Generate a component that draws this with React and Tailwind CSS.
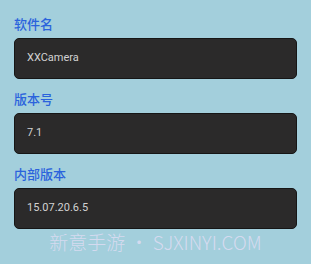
import React from 'react';

const fields = [
  { label: '软件名', value: 'XXCamera' },
  { label: '版本号', value: '7.1' },
  { label: '内部版本', value: '15.07.20.6.5' },
];

function Field({ label, value }) {
  return (
    <div className="mb-[11px]">
      <div
        className="h-[18px] leading-[18px] text-[13px] font-medium text-[#2b63dc] mb-[5px]"
        style={{ fontFamily: '"Noto Sans CJK SC", sans-serif' }}
      >
        {label}
      </div>
      <div className="h-[41px] rounded-[5px] border border-[#161616] bg-[#2b2a2a] flex items-center px-[12px]">
        <span
          className="text-[11px] text-[#d2d2d2]"
          style={{ fontFamily: 'Roboto, "Liberation Sans", sans-serif' }}
        >
          {value}
        </span>
      </div>
    </div>
  );
}

export default function App() {
  return (
    <div className="relative w-[311px] h-[264px] bg-[#a3cfdc] overflow-hidden">
      <div className="pt-[15px] pl-[14px] pr-[14px]">
        {fields.map(f => (
          <Field key={f.label} label={f.label} value={f.value} />
        ))}
      </div>
      {/* watermark */}
      <div
        className="absolute left-0 right-0 top-[231px] text-center text-[19px] leading-[22px] font-light text-[#dcdcf2]/90 whitespace-nowrap"
        style={{ fontFamily: '"Noto Sans CJK SC", "Open Sans", sans-serif' }}
      >
        新意手游 • SJXINYI.COM
      </div>
    </div>
  );
}
